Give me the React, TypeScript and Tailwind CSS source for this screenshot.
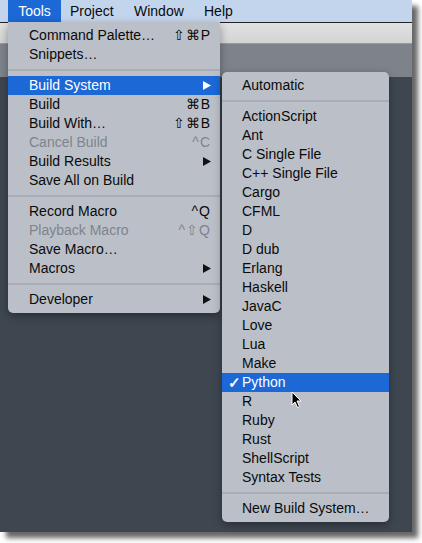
import React from 'react';

type Item =
  | 'sep'
  | { label: string; shortcut?: string; arrow?: boolean; disabled?: boolean; active?: boolean; checked?: boolean };

const toolsItems: Item[] = [
  { label: 'Command Palette…', shortcut: '⇧⌘P' },
  { label: 'Snippets…' },
  'sep',
  { label: 'Build System', arrow: true, active: true },
  { label: 'Build', shortcut: '⌘B' },
  { label: 'Build With…', shortcut: '⇧⌘B' },
  { label: 'Cancel Build', shortcut: '^C', disabled: true },
  { label: 'Build Results', arrow: true },
  { label: 'Save All on Build' },
  'sep',
  { label: 'Record Macro', shortcut: '^Q' },
  { label: 'Playback Macro', shortcut: '^⇧Q', disabled: true },
  { label: 'Save Macro…' },
  { label: 'Macros', arrow: true },
  'sep',
  { label: 'Developer', arrow: true },
];

const buildSystems = [
  'ActionScript', 'Ant', 'C Single File', 'C++ Single File', 'Cargo', 'CFML', 'D', 'D dub',
  'Erlang', 'Haskell', 'JavaC', 'Love', 'Lua', 'Make', 'Python', 'R', 'Ruby', 'Rust',
  'ShellScript', 'Syntax Tests',
];

const buildItems: Item[] = [
  { label: 'Automatic' },
  'sep',
  ...buildSystems.map((b) => (b === 'Python' ? { label: b, active: true, checked: true } : { label: b })),
  'sep',
  { label: 'New Build System…' },
];

function Arrow({ white }: { white?: boolean }) {
  return (
    <svg width="8" height="9" viewBox="0 0 8 9" className="shrink-0">
      <path d="M0 0 L8 4.5 L0 9 Z" fill={white ? '#ffffff' : '#111111'} />
    </svg>
  );
}

function MenuRows({ items, textLeft }: { items: Item[]; textLeft: string }) {
  return (
    <>
      {items.map((it, i) =>
        it === 'sep' ? (
          <div key={i} className="h-[12px] flex items-center">
            <div className="h-[2px] w-full bg-[#a9aeb6]" />
          </div>
        ) : (
          <div
            key={i}
            className={`relative h-[19px] flex items-center pr-[9px] ${textLeft} ${
              it.active ? 'bg-[#1b68d6] text-white' : it.disabled ? 'text-[#7e848b]' : 'text-[#0a0a0a]'
            }`}
          >
            {it.checked && <span className="absolute left-[6px] top-0 leading-[19px] text-[15px] font-bold">✓</span>}
            <span className="flex-1 whitespace-nowrap">{it.label}</span>
            {it.shortcut && <span className="whitespace-nowrap tracking-[1px]">{it.shortcut}</span>}
            {it.arrow && <Arrow white={it.active} />}
          </div>
        )
      )}
    </>
  );
}

export default function App() {
  return (
    <div className="w-[422px] h-[543px] bg-white" style={{ fontFamily: '"Liberation Sans", Arial, sans-serif' }}>
      <div className="relative w-[412px] h-[532px] flex flex-col shadow-[6px_6px_5px_rgba(0,0,0,0.6)] text-[14px]">
        {/* menu bar */}
        <div className="h-[23px] bg-[#c3d5ed] border-b border-[#222] flex items-stretch pl-[8px] text-[#0a0a0a]">
          <div className="w-[53px] flex items-center justify-center bg-[#1b68d6] text-white">Tools</div>
          <div className="w-[64px] pl-[9px] flex items-center">Project</div>
          <div className="w-[70px] pl-[9px] flex items-center">Window</div>
          <div className="pl-[9px] flex items-center">Help</div>
        </div>
        {/* title strip */}
        <div className="h-[21px] bg-gradient-to-b from-[#e2e2e2] to-[#d3d3d3] border-b border-[#9a9a9a]" />
        {/* tab bar */}
        <div className="h-[33px] bg-[#7e838b]" />
        <div className="flex-1 bg-[#3e4650]" />

        {/* Tools menu */}
        <div className="absolute left-[8px] top-[22px] w-[212px] pt-[4px] pb-[4px] bg-[#bbc0c8] rounded-b-[5px] shadow-[0_3px_8px_rgba(0,0,0,0.35)]">
          <MenuRows items={toolsItems} textLeft="pl-[21px]" />
        </div>

        {/* Build System submenu */}
        <div className="absolute left-[222px] top-[72px] w-[167px] pt-[4px] pb-[4px] bg-[#bbc0c8] rounded-[5px] shadow-[0_3px_8px_rgba(0,0,0,0.35)]">
          <MenuRows items={buildItems} textLeft="pl-[20px]" />
        </div>

        {/* cursor */}
        <svg className="absolute left-[291px] top-[391px]" width="12" height="18" viewBox="0 0 12 18">
          <path d="M1 1 L1 14 L4 11 L6.5 16.5 L8.5 15.5 L6 10 L10 10 Z" fill="#000" stroke="#fff" strokeWidth="1" strokeLinejoin="round" />
        </svg>
      </div>
    </div>
  );
}
